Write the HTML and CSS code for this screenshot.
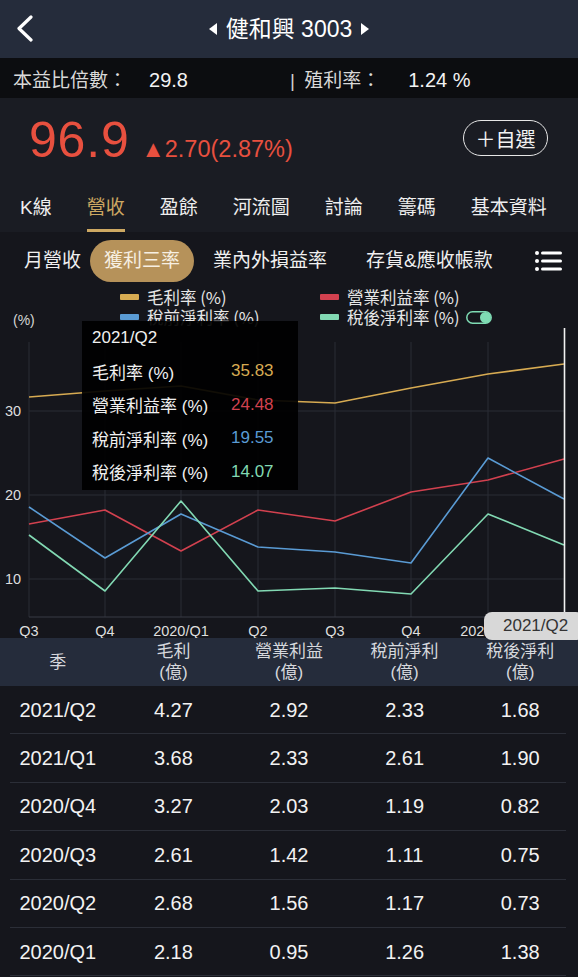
FILE: index.html
```html
<!DOCTYPE html>
<html lang="zh-Hant">
<head>
<meta charset="utf-8">
<title>健和興 3003</title>
<link rel="stylesheet" href="styles.css">
</head>
<body>
<div class="app">
  <header class="topbar">
    <div class="back">
      <svg width="18" height="28" viewBox="0 0 18 28"><path d="M15 2 L3 13.5 L15 25" fill="none" stroke="#fff" stroke-width="3.2" stroke-linecap="round" stroke-linejoin="round"/></svg>
    </div>
    <div class="title">
      <svg class="tri" width="8" height="12" viewBox="0 0 8 12"><path d="M8 0 L0 6 L8 12 Z" fill="#fff"/></svg>
      <span>健和興 3003</span>
      <svg class="tri" width="8" height="12" viewBox="0 0 8 12"><path d="M0 0 L8 6 L0 12 Z" fill="#fff"/></svg>
    </div>
    <div></div>
  </header>

  <div class="stats">
    <div class="stat stat-first"><span class="stat-label">本益比倍數：</span><span class="stat-val v1">29.8</span></div>
    <div class="stat"><span class="stat-label"><span class="bar">|</span> 殖利率：</span><span class="stat-val v2">1.24 %</span></div>
  </div>

  <div class="price-row">
    <div class="quote">
      <span class="price">96.9</span>
      <span class="change">▲2.70(2.87%)</span>
    </div>
    <div class="watch">＋自選</div>
  </div>

  <nav class="tabs">
    <span class="tab">K線</span>
    <span class="tab active">營收</span>
    <span class="tab">盈餘</span>
    <span class="tab">河流圖</span>
    <span class="tab">討論</span>
    <span class="tab">籌碼</span>
    <span class="tab">基本資料</span>
  </nav>

  <div class="subtabs">
    <span class="sub s1">月營收</span>
    <span class="sub pill">獲利三率</span>
    <span class="sub s3">業內外損益率</span>
    <span class="sub">存貨&amp;應收帳款</span>
    <span class="menu">
      <svg width="28" height="22" viewBox="0 0 28 22"><g fill="#fff"><circle cx="3" cy="3" r="2"/><circle cx="3" cy="11" r="2"/><circle cx="3" cy="19" r="2"/><rect x="7" y="1.5" width="21" height="3" rx="1.5"/><rect x="7" y="9.5" width="21" height="3" rx="1.5"/><rect x="7" y="17.5" width="21" height="3" rx="1.5"/></g></svg>
    </span>
  </div>

  <section class="chart">
    <div class="legend">
      <span class="unit">(%)</span>
      <span class="lg"><i class="sw gold"></i>毛利率 (%)</span>
      <span class="lg"><i class="sw red"></i>營業利益率 (%)</span>
      <span class="lg"><i class="sw blue"></i>稅前淨利率 (%)</span>
      <span class="lg"><i class="sw green"></i>稅後淨利率 (%)
        <svg class="toggle" width="26" height="13" viewBox="0 0 26 13"><rect x="0.8" y="0.8" width="24.4" height="11.4" rx="5.7" fill="none" stroke="#7fdcb4" stroke-width="1.5"/><circle cx="19.5" cy="6.5" r="5.5" fill="#7fdcb4"/></svg>
      </span>
    </div>

    <svg class="plot" width="578" height="311" viewBox="0 0 578 311">
      <g stroke="#2a2c34" stroke-width="1">
        <line x1="29" y1="15" x2="29" y2="290"/>
        <line x1="105" y1="15" x2="105" y2="290"/>
        <line x1="181" y1="15" x2="181" y2="290"/>
        <line x1="258" y1="15" x2="258" y2="290"/>
        <line x1="335" y1="15" x2="335" y2="290"/>
        <line x1="411" y1="15" x2="411" y2="290"/>
        <line x1="488" y1="15" x2="488" y2="290"/>
        <line x1="29" y1="84" x2="564" y2="84"/>
        <line x1="29" y1="168" x2="564" y2="168"/>
        <line x1="29" y1="252" x2="564" y2="252"/>
      </g>
      <line x1="29" y1="290" x2="564" y2="290" stroke="#383b44" stroke-width="1.2"/>
      <g class="axis-y">
        <text x="5" y="89">30</text>
        <text x="5" y="173">20</text>
        <text x="5" y="257">10</text>
      </g>
      <g class="axis-x" text-anchor="middle">
        <text x="29" y="309">Q3</text>
        <text x="105" y="309">Q4</text>
        <text x="181" y="309">2020/Q1</text>
        <text x="258" y="309">Q2</text>
        <text x="335" y="309">Q3</text>
        <text x="411" y="309">Q4</text>
        <text x="488" y="309">2021/Q1</text>
      </g>
      <g fill="none" stroke-width="1.6" stroke-linejoin="round">
        <polyline stroke="#d7ab52" points="29,70 105,64 181,59 258,73 335,76 411,61 488,47 564,37"/>
        <polyline stroke="#d2414f" points="29,197 105,183 181,224 258,183 335,194 411,165 488,153 564,132"/>
        <polyline stroke="#5a9bd4" points="29,180 105,231 181,187 258,220 335,225 411,236 488,131 564,172"/>
        <polyline stroke="#82d9b3" points="29,208 105,264 181,174 258,264 335,261 411,267 488,187 564,218"/>
      </g>
      <line x1="564.5" y1="1" x2="564.5" y2="290" stroke="#f2f2f2" stroke-width="1.6"/>
    </svg>

    <div class="tooltip">
      <span class="tt-date">2021/Q2</span><span></span>
      <span>毛利率 (%)</span><span class="gold-t">35.83</span>
      <span>營業利益率 (%)</span><span class="red-t">24.48</span>
      <span>稅前淨利率 (%)</span><span class="blue-t">19.55</span>
      <span>稅後淨利率 (%)</span><span class="green-t">14.07</span>
    </div>
    <div class="xpill">2021/Q2</div>
  </section>

  <div class="thead">
    <span>季</span>
    <span>毛利<br>(億)</span>
    <span>營業利益<br>(億)</span>
    <span>稅前淨利<br>(億)</span>
    <span>稅後淨利<br>(億)</span>
  </div>
  <div class="tbody">
    <div class="row"><span>2021/Q2</span><span>4.27</span><span>2.92</span><span>2.33</span><span>1.68</span></div>
    <div class="row"><span>2021/Q1</span><span>3.68</span><span>2.33</span><span>2.61</span><span>1.90</span></div>
    <div class="row"><span>2020/Q4</span><span>3.27</span><span>2.03</span><span>1.19</span><span>0.82</span></div>
    <div class="row"><span>2020/Q3</span><span>2.61</span><span>1.42</span><span>1.11</span><span>0.75</span></div>
    <div class="row"><span>2020/Q2</span><span>2.68</span><span>1.56</span><span>1.17</span><span>0.73</span></div>
    <div class="row"><span>2020/Q1</span><span>2.18</span><span>0.95</span><span>1.26</span><span>1.38</span></div>
  </div>
</div>
</body>
</html>
```
FILE: styles.css
```css
html, body {
  margin: 0;
  padding: 0;
  background: #15161c;
}
body {
  font-family: "Liberation Sans", "Noto Sans CJK TC", sans-serif;
  color: #eeeeee;
  width: 578px;
  height: 977px;
  overflow: hidden;
}
.app {
  width: 578px;
}

/* top bar */
.topbar {
  height: 58px;
  background: #252c3b;
  display: grid;
  grid-template-columns: 80px 1fr 80px;
  align-items: center;
}
.back {
  padding-left: 16px;
  display: flex;
  align-items: center;
}
.title {
  display: flex;
  align-items: center;
  justify-content: center;
  gap: 9px;
  font-size: 23px;
  color: #fff;
}
.title span {
  line-height: 1;
}

/* stats */
.stats {
  height: 40px;
  background: #0c0d10;
  display: flex;
  align-items: center;
  padding-left: 13px;
  font-size: 19px;
}
.stat-first {
  width: 277px;
}
.stat-label {
  color: #d9d9d9;
}
.stat-val {
  color: #f3f3f3;
  font-size: 20px;
}
.v1 { margin-left: 22px; }
.v2 { margin-left: 28px; }
.bar {
  color: #cfcfcf;
  margin-right: 4px;
}

/* price row */
.price-row {
  height: 82px;
  background: #1a1c23;
  display: flex;
  align-items: center;
  justify-content: space-between;
  padding: 0 30px 0 29px;
}
.quote {
  display: flex;
  align-items: baseline;
  gap: 12px;
  color: #e8503f;
  padding-top: 2px;
}
.price {
  font-size: 50px;
  line-height: 1;
  letter-spacing: 0.8px;
}
.change {
  font-size: 23.5px;
  line-height: 1;
}
.watch {
  width: 85px;
  height: 36px;
  box-sizing: border-box;
  border: 1.6px solid #e6e6e6;
  border-radius: 18px;
  display: flex;
  align-items: center;
  justify-content: center;
  font-size: 20px;
  color: #f2f2f2;
  margin-top: -2px;
}

/* tabs */
.tabs {
  height: 52px;
  background: #1a1c23;
  display: flex;
  padding-left: 20px;
  gap: 35px;
  font-size: 19px;
}
.tab {
  height: 52px;
  box-sizing: border-box;
  padding-top: 17px;
  line-height: 22px;
  border-bottom: 3px solid transparent;
  color: #eeeeee;
}
.tab.active {
  color: #cda862;
  border-bottom-color: #cda862;
}

/* sub tabs */
.subtabs {
  height: 54px;
  box-sizing: border-box;
  padding-top: 4px;
  display: flex;
  align-items: center;
  padding-left: 24px;
  font-size: 19px;
  color: #f0f0f0;
}
.sub {
  line-height: 22px;
}
.s1 { margin-right: 9px; }
.pill {
  height: 42px;
  padding: 0 14px;
  box-sizing: border-box;
  display: flex;
  align-items: center;
  border-radius: 21px;
  background: #b6925a;
  color: #f7efe2;
  margin-right: 19px;
}
.s3 { margin-right: 39px; }
.menu {
  margin-left: auto;
  padding-right: 16px;
  display: flex;
  align-items: center;
}

/* chart */
.chart {
  position: relative;
  height: 352px;
}
.legend {
  height: 41px;
  box-sizing: border-box;
  padding-top: 1px;
  display: grid;
  grid-template-columns: 120px 200px 1fr;
  grid-template-rows: 20px 20px;
  font-family: "Noto Sans CJK TC", "Liberation Sans", sans-serif;
  font-size: 16.5px;
  color: #e6e6e6;
}
.unit {
  grid-column: 1;
  grid-row: 2;
  font-family: "Liberation Sans", sans-serif;
  font-size: 14px;
  color: #d6d6d6;
  padding-left: 13px;
  padding-top: 5px;
}
.lg {
  display: flex;
  align-items: center;
  line-height: 20px;
  white-space: nowrap;
}
.legend .lg:nth-of-type(2) { grid-column: 2; grid-row: 1; }
.legend .lg:nth-of-type(3) { grid-column: 3; grid-row: 1; }
.legend .lg:nth-of-type(4) { grid-column: 2; grid-row: 2; }
.legend .lg:nth-of-type(5) { grid-column: 3; grid-row: 2; }
.sw {
  display: inline-block;
  width: 19px;
  height: 6px;
  margin-right: 8px;
  border-radius: 1px;
}
.sw.gold { background: #d7ab52; }
.sw.red { background: #d2414f; }
.sw.blue { background: #5a9bd4; }
.sw.green { background: #82d9b3; }
.toggle {
  margin-left: 6px;
}
.plot {
  display: block;
}
.axis-y text, .axis-x text {
  font-family: "Liberation Sans", sans-serif;
  font-size: 14.5px;
  fill: #dedede;
}

.tooltip {
  position: absolute;
  left: 82px;
  top: 35px;
  width: 216px;
  height: 169px;
  box-sizing: border-box;
  padding-left: 10px;
  padding-bottom: 2px;
  background: rgba(0, 0, 0, 0.92);
  display: grid;
  grid-template-columns: 139px 1fr;
  grid-auto-rows: 33.5px;
  align-items: center;
  font-size: 17px;
  color: #f0f0f0;
}
.tt-date {
  font-family: "Liberation Sans", sans-serif;
}
.gold-t { color: #d7ab52; }
.red-t { color: #d2414f; }
.blue-t { color: #5a9bd4; }
.green-t { color: #82d9b3; }

.xpill {
  position: absolute;
  left: 484px;
  top: 326px;
  width: 100px;
  height: 28px;
  box-sizing: border-box;
  padding-left: 19px;
  border-radius: 8px;
  background: #d8d8d8;
  color: #333;
  font-size: 17px;
  line-height: 28px;
}

/* table */
.thead {
  height: 48px;
  background: #252c3b;
  display: grid;
  grid-template-columns: repeat(5, 1fr);
  align-items: center;
  text-align: center;
  font-size: 17px;
  line-height: 21px;
  color: #d6d8dd;
}
.row {
  height: 48.4px;
  display: grid;
  grid-template-columns: repeat(5, 1fr);
  align-items: center;
  text-align: center;
  font-size: 20px;
  color: #f2f2f2;
  background: linear-gradient(#2b2e37, #2b2e37) no-repeat 10px 100% / 556px 1px;
}
```
